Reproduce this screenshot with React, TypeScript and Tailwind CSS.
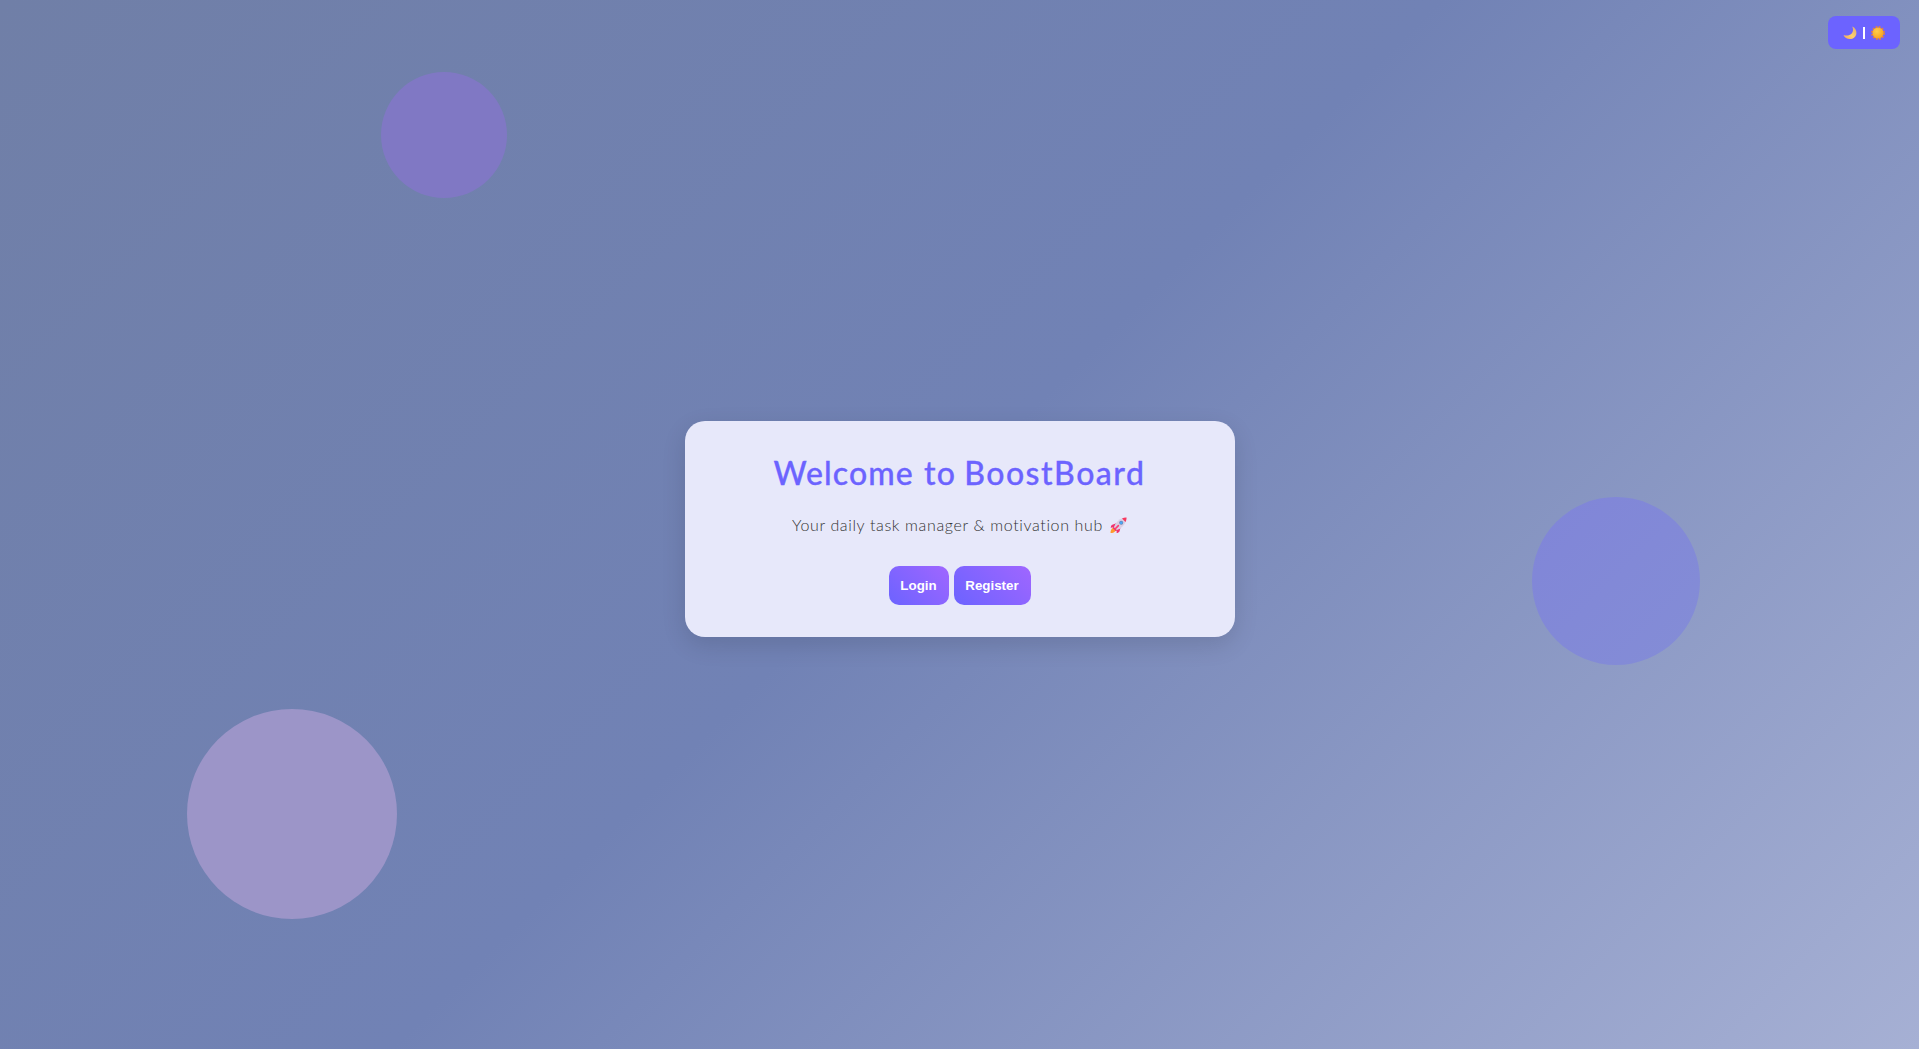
function Moon() {
  return (
    <svg viewBox="0 0 14 14" className="h-[14px] w-[14px]" aria-hidden="true">
      <defs>
        <linearGradient id="moon" x1="0" y1="1" x2="1" y2="0">
          <stop offset="0" stopColor="#f5a45d" />
          <stop offset="0.45" stopColor="#fdd06c" />
          <stop offset="1" stopColor="#d9a878" />
        </linearGradient>
      </defs>
      <path d="M9.2 0.6C12 1.7 13.7 4.4 13.4 7.4C13 10.8 10.2 13 7 13C4 13 1.4 11.3 0.5 8.9C3.3 9.9 6.5 9.7 8.5 7.7C10.5 5.7 10.4 2.8 9.2 0.6Z" fill="url(#moon)" />
    </svg>
  );
}

function Sun() {
  return (
    <svg viewBox="0 0 14 14" className="h-[14px] w-[14px]" aria-hidden="true">
      <defs>
        <radialGradient id="sun" cx="0.4" cy="0.35" r="0.7">
          <stop offset="0" stopColor="#ffce4a" />
          <stop offset="1" stopColor="#f9a21c" />
        </radialGradient>
      </defs>
      <circle cx="7" cy="7" r="6.1" fill="none" stroke="#e5813d" strokeWidth="1.7" strokeDasharray="1.9 1.29" />
      <circle cx="7" cy="7" r="5.5" fill="url(#sun)" />
    </svg>
  );
}

function Rocket() {
  return (
    <svg viewBox="0 0 17 17" className="h-[17px] w-[17px]" aria-hidden="true">
      <path d="M3.4 10.6L6 13.2C4.8 15.2 2.8 16 0.5 16C0.5 13.8 1.4 11.8 3.4 10.6Z" fill="#ff9a2e" />
      <path d="M6.3 6.3L2.3 7.7C1.2 8.4 0.7 9.6 0.7 10.7L4.6 10.2Z" fill="#f0326e" />
      <path d="M10.5 10.4L9.6 14.2C9 15.4 7.8 16 6.6 16L6.8 12.2Z" fill="#f0326e" />
      <path d="M3.9 10.2C5.5 5.8 8.7 2.4 13 1.1L15.9 3.9C14.6 8.2 11.2 11.5 6.9 13.1Z" fill="#d9cfe4" />
      <path d="M12 1.5C13.3 0.8 15 0.4 16.5 0.5C16.6 2 16.2 3.7 15.5 5Z" fill="#f8385f" />
      <path d="M3.5 9.7L7.3 13.5L5.7 14L3 11.2Z" fill="#e0326b" />
      <path d="M8.4 8.6L4.8 12.2" stroke="#ff3c72" strokeWidth="1.6" strokeLinecap="round" />
      <circle cx="11.2" cy="5.8" r="2" fill="#6a86b5" />
      <circle cx="11.2" cy="5.8" r="1.4" fill="#4aa6f5" />
    </svg>
  );
}

const actionClass =
  "h-[39px] rounded-[10px] bg-[linear-gradient(45deg,#6c63ff,#a066ff)] text-center font-['Liberation_Sans',Arial,sans-serif] text-[13.333px] leading-[15px] font-bold text-white";

export default function App() {
  return (
    <main className="relative flex h-screen w-full items-center justify-center overflow-hidden bg-[linear-gradient(135deg,#707fa7_0%,#7182b5_48.5%,#a6b0d4_100%)]">
      <div className="absolute top-[72px] left-[381px] size-[126px] rounded-full bg-[#8078c4]" />
      <div className="absolute top-[709px] left-[187px] size-[210px] rounded-full bg-[#9c95c8]" />
      <div className="absolute top-[497px] left-[1532px] size-[168px] rounded-full bg-[linear-gradient(135deg,#8085d8,#848dd6)]" />

      <button className="absolute top-4 right-[19px] flex h-[33px] w-[72px] items-center justify-center gap-[6px] rounded-lg bg-[#6c63ff] pt-[1px]">
        <Moon />
        <span className="h-3 w-[2px] bg-white" />
        <Sun />
      </button>

      <section className="relative mb-[-9px] flex h-[216px] w-[550px] flex-col items-center rounded-[20px] bg-[#e7e8fa] pt-8 text-center font-['Lato',sans-serif] shadow-[0_8px_25px_rgba(0,0,0,0.12)]">
        <h1 className="h-10 text-[32px] leading-10 font-medium whitespace-nowrap text-[#6c63ff] [-webkit-text-stroke:0.3px_#6c63ff]">
          <span className="mr-[2px] tracking-[1.1px]">Welcome</span>{" "}
          <span className="tracking-[1.2px]">to</span>{" "}
          <span className="tracking-[1.5px]">BoostBoard</span>
        </h1>
        <p className="mt-[22px] flex h-5 items-center gap-[5px] text-[16px] leading-5 font-light whitespace-nowrap text-[#333]">
          <span className="w-[313px] text-left tracking-[0.64px]">Your daily task manager &amp; motivation hub</span>
          <Rocket />
        </p>
        <div className="mt-[31px] flex gap-[5px]">
          <button className={`${actionClass} w-[60px]`}>Login</button>
          <button className={`${actionClass} w-[77px]`}>Register</button>
        </div>
      </section>
    </main>
  );
}
